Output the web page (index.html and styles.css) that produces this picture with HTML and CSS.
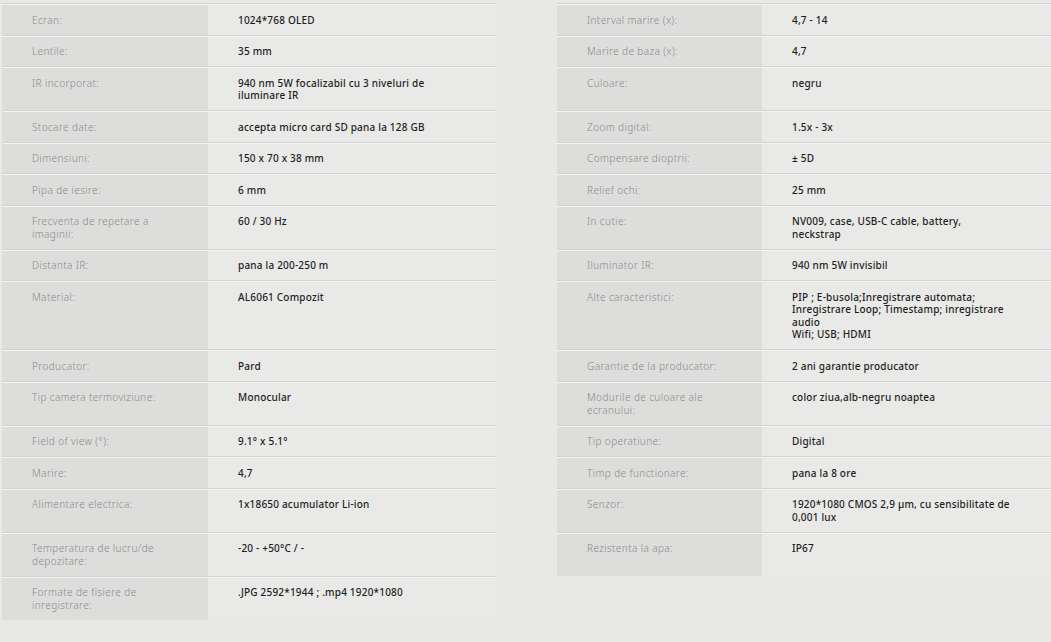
FILE: index.html
```html
<!DOCTYPE html>
<html lang="ro">
<head>
<meta charset="utf-8">
<title>Specificatii</title>
<link rel="stylesheet" href="styles.css">
</head>
<body>
<div class="specs">
  <div class="k">Ecran:</div><div class="v">1024*768 OLED</div>
  <div class="k r">Interval marire (x):</div><div class="v">4,7 - 14</div>

  <div class="k">Lentile:</div><div class="v">35 mm</div>
  <div class="k r">Marire de baza (x):</div><div class="v">4,7</div>

  <div class="k">IR incorporat:</div><div class="v">940 nm 5W focalizabil cu 3 niveluri de iluminare IR</div>
  <div class="k r">Culoare:</div><div class="v">negru</div>

  <div class="k">Stocare date:</div><div class="v">accepta micro card SD pana la 128 GB</div>
  <div class="k r">Zoom digital:</div><div class="v">1.5x - 3x</div>

  <div class="k">Dimensiuni:</div><div class="v">150 x 70 x 38 mm</div>
  <div class="k r">Compensare dioptrii:</div><div class="v">± 5D</div>

  <div class="k">Pipa de iesire:</div><div class="v">6 mm</div>
  <div class="k r">Relief ochi:</div><div class="v">25 mm</div>

  <div class="k">Frecventa de repetare a imaginii:</div><div class="v">60 / 30 Hz</div>
  <div class="k r">In cutie:</div><div class="v">NV009, case, USB-C cable, battery, neckstrap</div>

  <div class="k">Distanta IR:</div><div class="v">pana la 200-250 m</div>
  <div class="k r">Iluminator IR:</div><div class="v">940 nm 5W invisibil</div>

  <div class="k">Material:</div><div class="v">AL6061 Compozit</div>
  <div class="k r">Alte caracteristici:</div><div class="v">PIP ; E-busola;Inregistrare automata; Inregistrare Loop; Timestamp; inregistrare audio<br>Wifi; USB; HDMI</div>

  <div class="k">Producator:</div><div class="v">Pard</div>
  <div class="k r">Garantie de la producator:</div><div class="v">2 ani garantie producator</div>

  <div class="k">Tip camera termoviziune:</div><div class="v">Monocular</div>
  <div class="k r">Modurile de culoare ale ecranului:</div><div class="v">color ziua,alb-negru noaptea</div>

  <div class="k">Field of view (°):</div><div class="v">9.1° x 5.1°</div>
  <div class="k r">Tip operatiune:</div><div class="v">Digital</div>

  <div class="k">Marire:</div><div class="v">4,7</div>
  <div class="k r">Timp de functionare:</div><div class="v">pana la 8 ore</div>

  <div class="k">Alimentare electrica:</div><div class="v">1x18650 acumulator Li-ion</div>
  <div class="k r">Senzor:</div><div class="v">1920*1080 CMOS 2,9 µm, cu sensibilitate de 0,001 lux</div>

  <div class="k">Temperatura de lucru/de depozitare:</div><div class="v">-20 - +50°C / -</div>
  <div class="k r">Rezistenta la apa:</div><div class="v">IP67</div>

  <div class="k">Formate de fisiere de inregistrare:</div><div class="v">.JPG 2592*1944 ; .mp4 1920*1080</div>
</div>
</body>
</html>
```

FILE: styles.css
```css
html, body {
  margin: 0;
  background: #e8e8e7;
}
body {
  font-family: "Noto Sans", "Liberation Sans", sans-serif;
  font-size: 10px;
  padding: 3px 0 0 2px;
}
.specs {
  display: grid;
  grid-template-columns: 206px 288px 61px 205px 1fr;
}
.k, .v {
  border-top: 1px solid #d2d2d2;
  box-shadow: inset 0 1px 0 #f3f3f3;
  padding: 9.5px 30px 8.5px 30px;
  line-height: 12.5px;
}
.k {
  grid-column: 1;
  background: #dddddc;
  color: #8a8a8a;
  font-weight: 300;
  letter-spacing: 0.4px;
  padding-right: 30px;
}
.k.r {
  grid-column: 4;
}
.v {
  background: #e9e9e8;
  color: #1e1e1e;
  font-weight: 500;
  letter-spacing: 0.2px;
  padding-right: 39px;
}
```
